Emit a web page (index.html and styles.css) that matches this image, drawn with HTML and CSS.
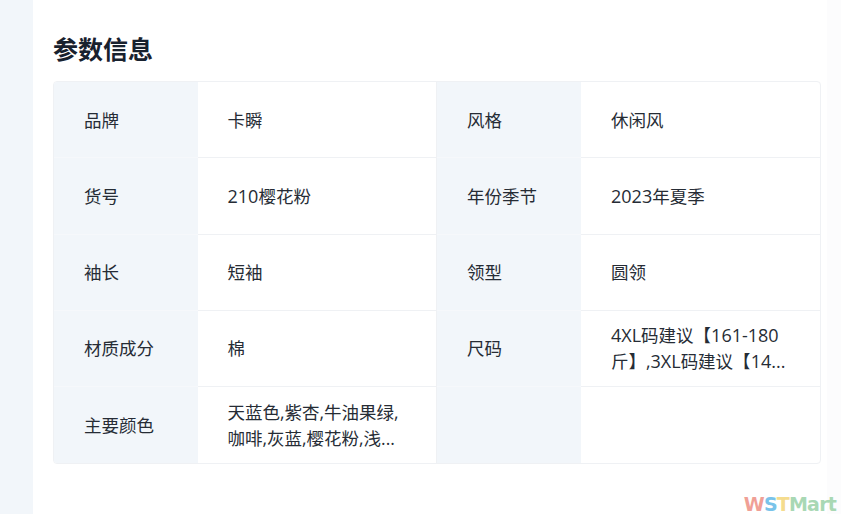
FILE: index.html
```html
<!DOCTYPE html>
<html lang="zh-CN">
<head>
<meta charset="utf-8">
<title>参数信息</title>
<link rel="stylesheet" href="styles.css">
</head>
<body>
<main class="panel">
  <h2 class="title">参数信息</h2>
  <div class="params">
    <div class="row">
      <div class="label">品牌</div><div class="value"><p>卡瞬</p></div>
      <div class="label">风格</div><div class="value"><p>休闲风</p></div>
    </div>
    <div class="row">
      <div class="label">货号</div><div class="value"><p><span class="latin">210</span>樱花粉</p></div>
      <div class="label">年份季节</div><div class="value"><p><span class="latin">2023</span>年夏季</p></div>
    </div>
    <div class="row">
      <div class="label">袖长</div><div class="value"><p>短袖</p></div>
      <div class="label">领型</div><div class="value"><p>圆领</p></div>
    </div>
    <div class="row">
      <div class="label">材质成分</div><div class="value"><p>棉</p></div>
      <div class="label">尺码</div><div class="value"><p><span class="latin">4XL</span>码建议【<span class="latin">161-180</span>斤】,<span class="latin">3XL</span>码建议【<span class="latin">14...</span></p></div>
    </div>
    <div class="row">
      <div class="label">主要颜色</div><div class="value"><p>天蓝色,紫杏,牛油果绿,咖啡,灰蓝,樱花粉,浅...</p></div>
      <div class="label"></div><div class="value"></div>
    </div>
  </div>
</main>
<div class="watermark"><span class="w">W</span><span class="s">S</span><span class="t">T</span><span class="m">Mart</span></div>
</body>
</html>
```
FILE: styles.css
```css
* { box-sizing: border-box; }
html, body { margin: 0; height: 100%; }
body {
  background: #f2f6fa;
  padding-left: 33px;
  overflow: hidden;
  font-family: "Open Sans", "Noto Sans CJK SC", sans-serif;
  color: #262c35;
}
.panel {
  background: linear-gradient(to right, #fff 794px, #fcfcfd 794px);
  height: 514px;
  padding: 32px 20px 0;
}
.title {
  margin: 0 0 14px;
  font-size: 25px;
  line-height: 35px;
  font-weight: 700;
  color: #18212e;
}
.params {
  border: 1px solid #eff1f4;
  border-radius: 4px;
  overflow: hidden;
}
.row {
  display: grid;
  grid-template-columns: 143.5px 239.5px 144px 1fr;
  height: 76.25px;
}
.row:last-child { height: 76px; }
.label {
  background: #f2f6fa;
  padding: 0 0 1px 30px;
  font-size: 17.5px;
  display: flex;
  align-items: center;
  border-bottom: 1px solid #f6f8fb;
}
.value {
  padding: 0 29px 0 30px;
  font-size: 17.5px;
  line-height: 26px;
  display: flex;
  align-items: center;
  min-width: 0;
  border-bottom: 1px solid #eff1f4;
}
.value p { margin: 0; }
.latin { font-size: 18px; }
.value:nth-child(2) { border-right: 1px solid #eff1f4; }
.row:last-child .label,
.row:last-child .value { border-bottom: 0; }
.watermark {
  position: absolute;
  right: 5px;
  bottom: -2px;
  font-family: "DejaVu Sans", sans-serif;
  font-weight: 700;
  font-size: 19px;
  line-height: 24px;
  letter-spacing: -0.8px;
}
.w { color: #f0a096; }
.s { color: #79c3ea; }
.t { color: #f5dc8e; }
.m { color: #a9d8b4; }
```
